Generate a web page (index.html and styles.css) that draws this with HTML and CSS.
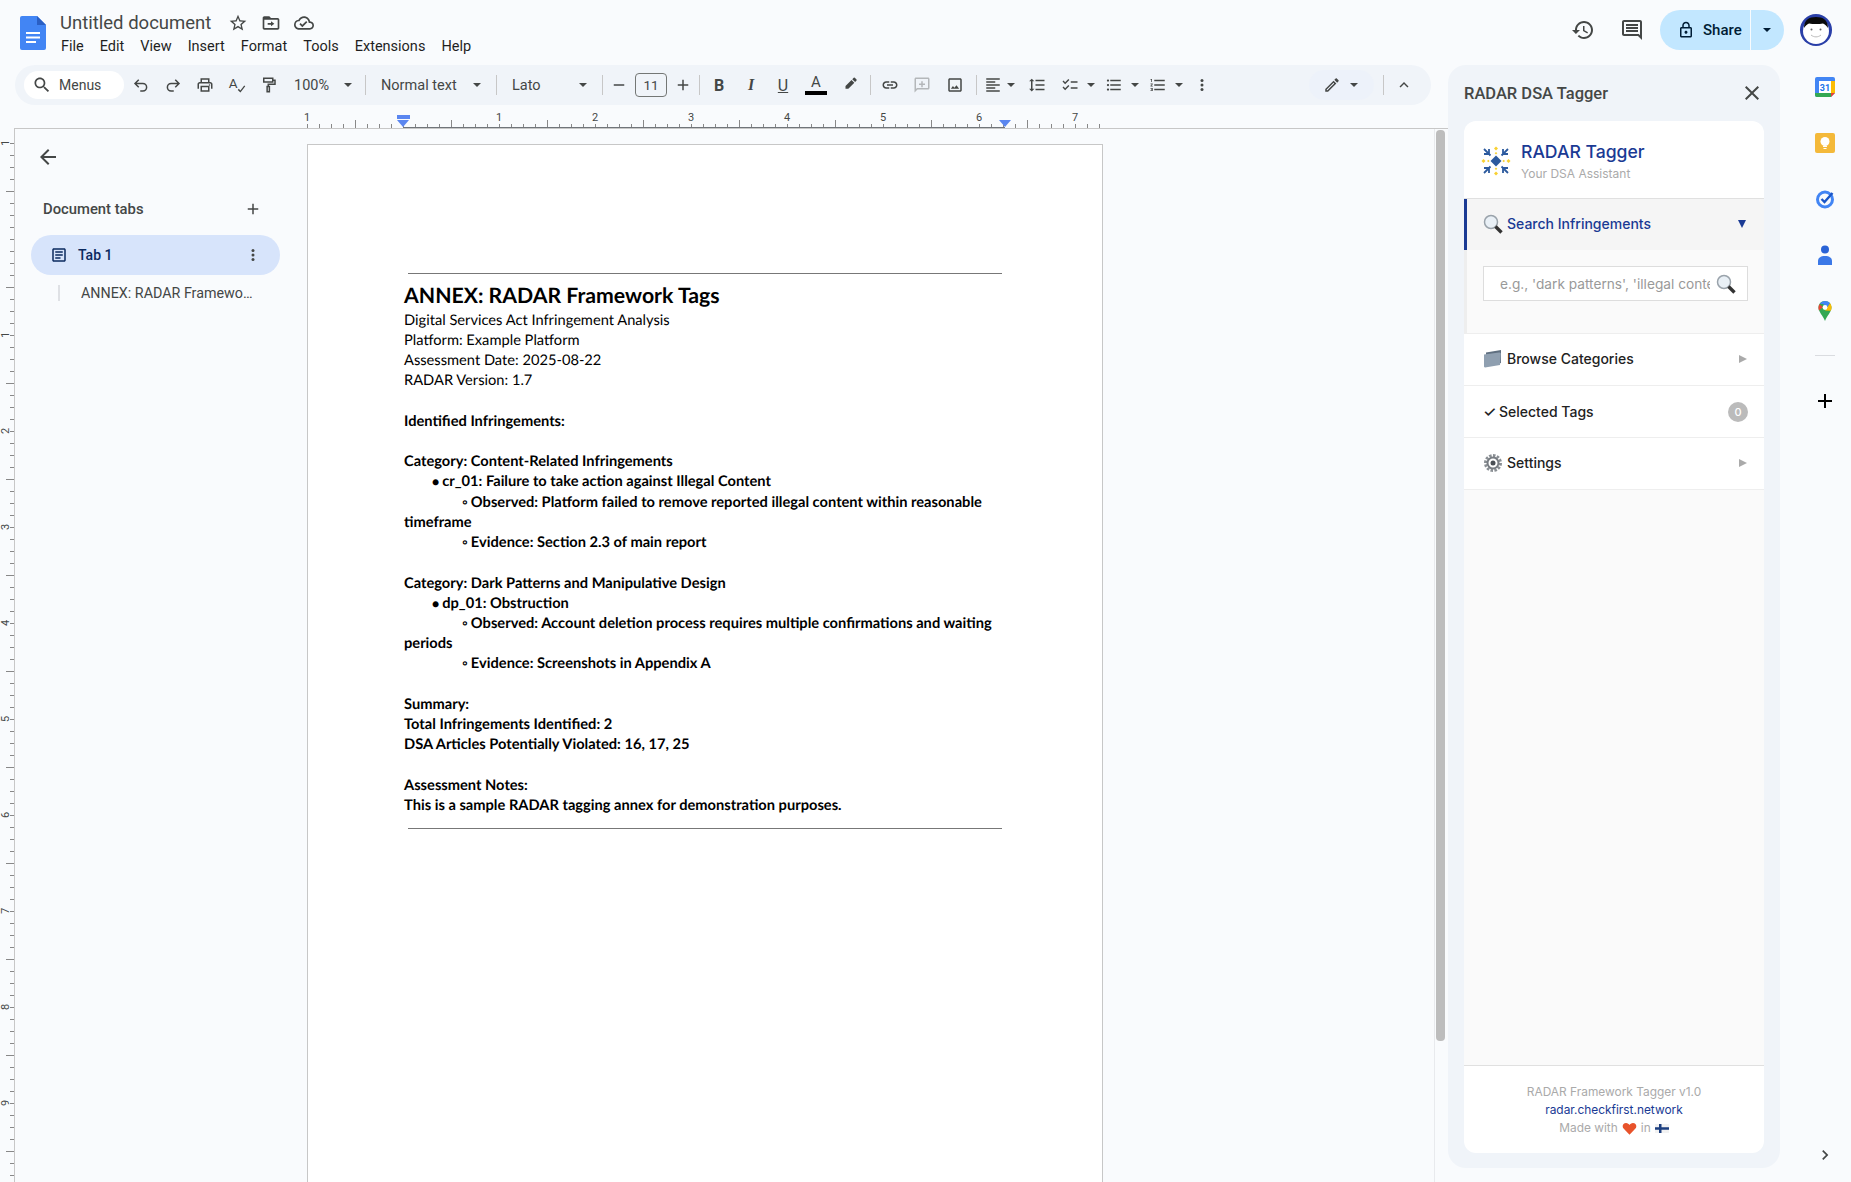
FILE: index.html
```html
<!DOCTYPE html>
<html lang="en">
<head>
    <meta charset="UTF-8">
    <meta name="viewport" content="width=device-width, initial-scale=1.0">
    <title>Untitled document</title>
    <link rel="stylesheet" href="styles.css">
</head>
<body>

    <header class="topbar">
        <svg class="docs-logo" viewBox="0 0 26 34">
            <path d="M2 0h15l9 9v23a2 2 0 0 1-2 2H2a2 2 0 0 1-2-2V2a2 2 0 0 1 2-2z" fill="#4285f4"/>
            <path d="M17 0l9 9h-9z" fill="#2a5fc4"/>
            <path d="M6 16h14v2H6zM6 20.500h14v2H6zM6 25h10v2H6z" fill="#fff"/>
        </svg>
        <div class="doc-head">
            <div class="title-row">
                <span class="doc-title">Untitled document</span>
                <svg class="title-icon first" viewBox="0 0 24 24"><path d="M22 9.240l-7.190-.620L12 2 9.190 8.630 2 9.240l5.460 4.730L5.820 21 12 17.270 18.180 21l-1.630-7.030L22 9.240zM12 15.400l-3.760 2.270 1-4.280-3.320-2.880 4.380-.380L12 6.100l1.710 4.040 4.380.380-3.320 2.880 1 4.280L12 15.400z"/></svg>
                <svg class="title-icon" viewBox="0 0 24 24"><path d="M20 6h-8l-2-2H4c-1.100 0-2 .900-2 2v12c0 1.100.900 2 2 2h16c1.100 0 2-.900 2-2V8c0-1.100-.900-2-2-2zm0 12H4V8h16v10zM12 16l4-3-4-3v2H8v2h4z"/></svg>
                <svg class="title-icon" viewBox="0 0 24 24"><path d="M19.350 10.040C18.670 6.590 15.640 4 12 4 9.110 4 6.600 5.640 5.350 8.040 2.340 8.360 0 10.910 0 14c0 3.310 2.690 6 6 6h13c2.760 0 5-2.240 5-5 0-2.640-2.050-4.780-4.650-4.960zM19 18H6c-2.210 0-4-1.790-4-4 0-2.050 1.530-3.760 3.560-3.970l1.070-.110.500-.950C8.080 7.140 9.940 6 12 6c2.620 0 4.880 1.860 5.390 4.430l.300 1.500 1.530.110c1.560.100 2.780 1.410 2.780 2.960 0 1.650-1.350 3-3 3zm-9-3.820l-2.090-2.090L6.500 13.500 10 17l6.010-6.010-1.410-1.410z"/></svg>
            </div>
            <nav class="menubar">
                <span>File</span><span>Edit</span><span>View</span><span>Insert</span><span>Format</span><span>Tools</span><span>Extensions</span><span>Help</span>
            </nav>
        </div>
        <div class="top-actions">
            <svg class="top-icon" viewBox="0 0 24 24"><path d="M13 3c-4.970 0-9 4.030-9 9H1l3.890 3.890.070.140L9 12H6c0-3.870 3.130-7 7-7s7 3.130 7 7-3.130 7-7 7c-1.930 0-3.680-.790-4.940-2.060l-1.420 1.420C8.270 19.990 10.510 21 13 21c4.970 0 9-4.030 9-9s-4.030-9-9-9zm-1 5v5l4.280 2.540.720-1.210-3.500-2.080V8H12z"/></svg>
            <svg class="top-icon" viewBox="0 0 24 24"><path d="M21.990 4c0-1.100-.890-2-1.990-2H4c-1.100 0-2 .900-2 2v12c0 1.100.900 2 2 2h14l4 4-.010-18zM20 4v13.170L18.830 16H4V4h16zM6 12h12v2H6zm0-3h12v2H6zm0-3h12v2H6z"/></svg>
            <div class="share">
                <div class="share-main">
                    <svg class="share-lock" viewBox="0 0 24 24"><path d="M18 8h-1V6c0-2.760-2.240-5-5-5S7 3.240 7 6v2H6c-1.100 0-2 .900-2 2v10c0 1.100.900 2 2 2h12c1.100 0 2-.900 2-2V10c0-1.100-.900-2-2-2zM9 6c0-1.660 1.340-3 3-3s3 1.340 3 3v2H9V6zm9 14H6V10h12v10zm-6-3c1.100 0 2-.900 2-2s-.900-2-2-2-2 .900-2 2 .900 2 2 2z"/></svg>
                    <span>Share</span>
                </div>
                <div class="share-more"><i class="caret dark"></i></div>
            </div>
            <svg class="avatar" viewBox="0 0 32 32">
                <circle cx="16" cy="16" r="16" fill="#2a3fa8"/>
                <circle cx="16" cy="17" r="13" fill="#fff"/>
                <path d="M4 14C4 6 9 3 16 3s12 3 12 11c-1.500-2-3-4-5-4.500-4 .800-10 .800-14 0C7 10 5.500 12 4 14z" fill="#0a0a0a"/>
                <path d="M11 21c3 2.500 7 2.500 10 0" fill="none" stroke="#bbb" stroke-width="1"/>
                <circle cx="11.500" cy="15.500" r="1" fill="#666"/>
                <circle cx="20.500" cy="15.500" r="1" fill="#666"/>
            </svg>
        </div>
    </header>

    <div class="workspace">
        <main class="doc-area">
            <div class="toolbar">
                <div class="menus-search">
                    <svg viewBox="0 0 24 24"><path d="M15.500 14h-.790l-.280-.270C15.410 12.590 16 11.110 16 9.500 16 5.910 13.090 3 9.500 3S3 5.910 3 9.500 5.910 16 9.500 16c1.610 0 3.090-.590 4.230-1.570l.270.280v.790l5 4.990L20.490 19l-4.990-5zm-6 0C7.010 14 5 11.990 5 9.500S7.010 5 9.500 5 14 7.010 14 9.500 11.990 14 9.500 14z"/></svg>
                    <span>Menus</span>
                </div>
                <div class="tb"><svg class="line" viewBox="0 0 24 24"><path d="M9 15 4 10l5-5M4 10h10.500a5 5 0 0 1 0 10H11"/></svg></div>
                <div class="tb"><svg class="line" viewBox="0 0 24 24"><path d="m15 15 5-5-5-5M20 10H9.500a5 5 0 0 0 0 10H13"/></svg></div>
                <div class="tb"><svg viewBox="0 0 24 24"><path d="M19 8h-1V3H6v5H5c-1.660 0-3 1.340-3 3v6h4v4h12v-4h4v-6c0-1.660-1.340-3-3-3zM8 5h8v3H8V5zm8 14H8v-4h8v4zm2-2v-4H6v4H4v-6c0-.550.450-1 1-1h14c.550 0 1 .450 1 1v6h-2z"/><circle cx="18" cy="12" r="1"/></svg></div>
                <div class="tb"><svg viewBox="0 0 24 24"><text x="1" y="16" class="icon-letter">A</text><path d="m13 18.500 1.400-1.400 2.100 2.100 5.100-6.600 1.400 1.200-6.400 8.200z"/></svg></div>
                <div class="tb"><svg class="line" viewBox="0 0 24 24"><path d="M5 3h12v5H5zM17 5.500h3V11h-9v3M9.500 14h3v7h-3z"/></svg></div>
                <div class="drop drop-zoom"><span>100%</span><i class="caret"></i></div>
                <i class="sep"></i>
                <div class="drop drop-style"><span>Normal text</span><i class="caret"></i></div>
                <i class="sep"></i>
                <div class="drop drop-font"><span>Lato</span><i class="caret"></i></div>
                <i class="sep"></i>
                <div class="tb"><svg viewBox="0 0 24 24"><path d="M5 11h14v2H5z"/></svg></div>
                <div class="size-box">11</div>
                <div class="tb"><svg viewBox="0 0 24 24"><path d="M19 13h-6v6h-2v-6H5v-2h6V5h2v6h6v2z"/></svg></div>
                <i class="sep"></i>
                <div class="tb tb-bold">B</div>
                <div class="tb tb-italic">I</div>
                <div class="tb tb-under">U</div>
                <div class="tb tb-color"><span>A</span><i></i></div>
                <div class="tb tb-pen"><svg viewBox="0 0 24 24"><path d="M17.750 9 14 5.250l-8 8V17h3.750l8-8zm2.960-2.960c.390-.390.390-1.020 0-1.410l-2.340-2.340a.996.996 0 0 0-1.410 0L15 4.250 18.750 8l1.960-1.960z"/></svg></div>
                <i class="sep sep-after-pen"></i>
                <div class="tb tb-link"><svg viewBox="0 0 24 24"><path d="M17 7h-4v2h4c1.650 0 3 1.350 3 3s-1.350 3-3 3h-4v2h4c2.760 0 5-2.240 5-5s-2.240-5-5-5zm-6 8H7c-1.650 0-3-1.350-3-3s1.350-3 3-3h4V7H7c-2.760 0-5 2.240-5 5s2.240 5 5 5h4v-2zm-3-4h8v2H8z"/></svg></div>
                <div class="tb tb-off"><svg viewBox="0 0 24 24"><path d="M20 2H4c-1.100 0-2 .900-2 2v18l4-4h14c1.100 0 2-.900 2-2V4c0-1.100-.900-2-2-2zm0 14H5.200L4 17.200V4h16v12zM13 7h-2v3H8v2h3v3h2v-3h3v-2h-3z"/></svg></div>
                <div class="tb tb-image"><svg viewBox="0 0 24 24"><path d="M19 3H5c-1.100 0-2 .900-2 2v14c0 1.100.900 2 2 2h14c1.100 0 2-.900 2-2V5c0-1.100-.900-2-2-2zm0 16H5V5h14v14zm-5.040-6.710-2.750 3.540-1.960-2.360L6.500 17h11l-3.540-4.710z"/></svg></div>
                <i class="sep sep-after-image"></i>
                <div class="tb-split tb-align">
                    <svg viewBox="0 0 24 24"><path d="M15 15H3v2h12v-2zm0-8H3v2h12V7zM3 13h18v-2H3v2zm0 8h18v-2H3v2zM3 3v2h18V3H3z"/></svg><i class="caret"></i>
                </div>
                <div class="tb"><svg viewBox="0 0 24 24"><path d="M6 7h2.500L5 3.500 1.500 7H4v10H1.500L5 20.500 8.500 17H6V7zm4-2v2h12V5H10zm0 14h12v-2H10v2zm0-6h12v-2H10v2z"/></svg></div>
                <div class="tb-split tb-check">
                    <svg viewBox="0 0 24 24"><path d="M22 7h-9v2h9V7zm0 8h-9v2h9v-2zM5.540 11 2 7.460l1.410-1.410 2.120 2.120 4.240-4.240 1.410 1.410L5.540 11zm0 8L2 15.460l1.410-1.410 2.120 2.120 4.240-4.240 1.410 1.410L5.540 19z"/></svg><i class="caret"></i>
                </div>
                <div class="tb-split">
                    <svg viewBox="0 0 24 24"><path d="M4 10.500c-.830 0-1.500.670-1.500 1.500s.670 1.500 1.500 1.500 1.500-.670 1.500-1.500-.670-1.500-1.500-1.500zm0-6c-.830 0-1.500.670-1.500 1.500S3.170 7.500 4 7.500 5.500 6.830 5.500 6 4.830 4.500 4 4.500zm0 12c-.830 0-1.500.680-1.500 1.500s.680 1.500 1.500 1.500 1.500-.680 1.500-1.500-.670-1.500-1.500-1.500zM7 19h14v-2H7v2zm0-6h14v-2H7v2zm0-8v2h14V5H7z"/></svg><i class="caret"></i>
                </div>
                <div class="tb-split">
                    <svg viewBox="0 0 24 24"><path d="M2 17h2v.500H3v1h1v.500H2v1h3v-4H2v1zm1-9h1V4H2v1h1v3zm-1 3h1.800L2 13.100v.900h3v-1H3.200L5 10.900V10H2v1zm5-6v2h14V5H7zm0 14h14v-2H7v2zm0-6h14v-2H7v2z"/></svg><i class="caret"></i>
                </div>
                <div class="tb tb-more"><svg viewBox="0 0 24 24"><circle cx="12" cy="6" r="2"/><circle cx="12" cy="12" r="2"/><circle cx="12" cy="18" r="2"/></svg></div>
                <div class="mode-pill">
                    <svg viewBox="0 0 24 24"><path d="M3 17.250V21h3.750L17.810 9.940l-3.750-3.750L3 17.250zM5.920 19H5v-.920l9.060-9.060.920.920L5.920 19zM20.710 5.630l-2.340-2.340c-.200-.200-.450-.290-.710-.290s-.510.100-.700.290l-1.830 1.830 3.750 3.750 1.830-1.830c.390-.390.390-1.020 0-1.410z"/></svg>
                    <i class="caret"></i>
                </div>
                <i class="sep sep-mode"></i>
                <div class="tb tb-collapse"><svg viewBox="0 0 24 24"><path d="M7.410 15.410 12 10.830l4.590 4.580L18 14l-6-6-6 6z"/></svg></div>
            </div>

            <div class="ruler">
                <div class="ruler-track">
                    <div class="ruler-nums">
                        <span>1</span><span></span><span>1</span><span>2</span><span>3</span><span>4</span><span>5</span><span>6</span><span>7</span>
                    </div>
                    <i class="indent-bar"></i>
                    <i class="marker marker-left"></i>
                    <i class="marker marker-right"></i>
                    <i class="ruler-active"></i>
                </div>
            </div>

            <div class="doc-body">
                <div class="vruler">
                    <span>1</span><span></span><span>1</span><span>2</span><span>3</span><span>4</span><span>5</span><span>6</span><span>7</span><span>8</span><span>9</span>
                </div>
                <div class="editor">
                    <aside class="outline">
                        <svg class="back" viewBox="0 0 24 24"><path d="M20 11H7.830l5.590-5.590L12 4l-8 8 8 8 1.410-1.410L7.830 13H20v-2z"/></svg>
                        <div class="outline-head">
                            <span>Document tabs</span>
                            <svg viewBox="0 0 24 24"><path d="M19 13h-6v6h-2v-6H5v-2h6V5h2v6h6v2z"/></svg>
                        </div>
                        <div class="tab-pill">
                            <svg viewBox="0 0 24 24"><path d="M19 5v14H5V5h14m0-2H5c-1.100 0-2 .900-2 2v14c0 1.100.900 2 2 2h14c1.100 0 2-.900 2-2V5c0-1.100-.900-2-2-2zM14 17H7v-2h7v2zm3-4H7v-2h10v2zm0-4H7V7h10v2z"/></svg>
                            <span>Tab 1</span>
                            <svg class="tab-dots" viewBox="0 0 24 24"><circle cx="12" cy="6" r="2"/><circle cx="12" cy="12" r="2"/><circle cx="12" cy="18" r="2"/></svg>
                        </div>
                        <div class="outline-item"><span>ANNEX: RADAR Framework Tags</span></div>
                    </aside>
                    <article class="page">
                        <div class="page-rule"></div>
                        <h1>ANNEX: RADAR Framework Tags</h1>
                        <p>Digital Services Act Infringement Analysis</p>
                        <p>Platform: Example Platform</p>
                        <p>Assessment Date: 2025-08-22</p>
                        <p>RADAR Version: 1.7</p>
                        <p class="blank"></p>
                        <p class="b">Identified Infringements:</p>
                        <p class="blank"></p>
                        <p class="b">Category: Content-Related Infringements</p>
                        <p class="b lvl1"><span class="dot">●</span>cr_01: Failure to take action against Illegal Content</p>
                        <p class="b lvl2"><span class="ring">◦</span>Observed: Platform failed to remove reported illegal content within reasonable timeframe</p>
                        <p class="b lvl2"><span class="ring">◦</span>Evidence: Section 2.3 of main report</p>
                        <p class="blank"></p>
                        <p class="b">Category: Dark Patterns and Manipulative Design</p>
                        <p class="b lvl1"><span class="dot">●</span>dp_01: Obstruction</p>
                        <p class="b lvl2"><span class="ring">◦</span>Observed: Account deletion process requires multiple confirmations and waiting periods</p>
                        <p class="b lvl2"><span class="ring">◦</span>Evidence: Screenshots in Appendix A</p>
                        <p class="blank"></p>
                        <p class="b">Summary:</p>
                        <p class="b">Total Infringements Identified: 2</p>
                        <p class="b">DSA Articles Potentially Violated: 16, 17, 25</p>
                        <p class="blank"></p>
                        <p class="b">Assessment Notes:</p>
                        <p class="b">This is a sample RADAR tagging annex for demonstration purposes.</p>
                        <div class="page-rule end"></div>
                    </article>
                    <div class="scrollbar"><i></i></div>
                </div>
            </div>
        </main>

        <section class="panel">
            <div class="panel-head">
                <span>RADAR DSA Tagger</span>
                <svg viewBox="0 0 24 24"><path d="M19 6.410 17.590 5 12 10.590 6.410 5 5 6.410 10.590 12 5 17.590 6.410 19 12 13.410 17.590 19 19 17.590 13.410 12z"/></svg>
            </div>
            <div class="card">
                <div class="brand">
                    <svg class="brand-logo" viewBox="0 0 32 32">
                        <path d="M16 10.500 21.500 16 16 21.500 10.500 16z" fill="#2c5a9e"/>
                        <g fill="#f8d030">
                            <path d="M16 1.500 18 3.500 16 5.500 14 3.500z"/><path d="M16 7 17.300 8.300 16 9.600 14.700 8.300z"/>
                            <path d="M16 26.500 18 28.500 16 30.500 14 28.500z"/><path d="M16 22.400 17.300 23.700 16 25 14.700 23.700z"/>
                            <path d="M1.500 16 3.500 14 5.500 16 3.500 18z"/><path d="M7 16 8.300 14.700 9.600 16 8.300 17.300z"/>
                            <path d="M26.500 16 28.500 14 30.500 16 28.500 18z"/><path d="M22.400 16 23.700 14.700 25 16 23.700 17.300z"/>
                        </g>
                        <g fill="none" stroke="#2c5a9e" stroke-width="1.800">
                            <path d="M4 4l6.500 6.500M4 9h5.500M9 4v5.500"/><path d="M28 4l-6.500 6.500M28 9h-5.500M23 4v5.500"/>
                            <path d="M4 28l6.500-6.500M4 23h5.500M9 28v-5.500"/><path d="M28 28l-6.500-6.500M28 23h-5.500M23 28v-5.500"/>
                        </g>
                    </svg>
                    <div>
                        <div class="brand-name">RADAR Tagger</div>
                        <div class="brand-sub">Your DSA Assistant</div>
                    </div>
                </div>

                <div class="sec-head active">
                    <svg class="emoji" viewBox="0 0 20 20"><circle cx="8" cy="8" r="6.500" fill="#e9f0f6" stroke="#9aa3ab" stroke-width="1.500"/><path d="M12.500 12.500 18.500 18.500" stroke="#333" stroke-width="3.400"/></svg>
                    <span class="sec-label">Search Infringements</span>
                    <i class="arrow-down"></i>
                </div>
                <div class="sec-body">
                    <div class="search-box">
                        <input type="text" placeholder="e.g., 'dark patterns', 'illegal content'">
                        <svg class="emoji" viewBox="0 0 20 20"><circle cx="8" cy="8" r="6.500" fill="#e9f0f6" stroke="#9aa3ab" stroke-width="1.500"/><path d="M12.500 12.500 18.500 18.500" stroke="#333" stroke-width="3.400"/></svg>
                    </div>
                </div>

                <div class="sec-head">
                    <svg class="emoji" viewBox="0 0 20 20"><path d="M3 3.500 18 1v13L3 17z" fill="#5f6f80"/><path d="M1 5.500 16 3.500c1.200 0 1.800.500 1.800 1.500L17 16 2 18.500c-.700 0-1-.500-1-1.200z" fill="#8f9fb0"/></svg>
                    <span class="sec-label">Browse Categories</span>
                    <i class="arrow-right"></i>
                </div>
                <div class="sec-head tags">
                    <span class="check">✓</span>
                    <span class="sec-label">Selected Tags</span>
                    <span class="badge">0</span>
                </div>
                <div class="sec-head">
                    <svg class="emoji" viewBox="0 0 20 20"><circle cx="10" cy="10" r="7.500" fill="none" stroke="#8a8f94" stroke-width="3" stroke-dasharray="2.500 1.400"/><circle cx="10" cy="10" r="5.500" fill="none" stroke="#777c82" stroke-width="2"/><circle cx="10" cy="10" r="2.500" fill="#4a4f55"/></svg>
                    <span class="sec-label">Settings</span>
                    <i class="arrow-right"></i>
                </div>

                <div class="card-fill"></div>

                <footer class="card-foot">
                    <div>RADAR Framework Tagger v1.0</div>
                    <div class="foot-link">radar.checkfirst.network</div>
                    <div class="foot-made">Made with
                        <svg class="heart" viewBox="0 0 24 24"><path d="M12 22 2.500 12C-.500 8.500 1.500 3 6.500 3c2.500 0 4.500 1.500 5.500 3.500C13 4.500 15 3 17.500 3c5 0 7 5.500 4 9z" fill="#e8532b"/></svg>
                        in
                        <svg class="flag" viewBox="0 0 14 9"><path d="M0 0h14v9H0z" fill="#f2f2f2"/><path d="M4 0h2.500v9H4zM0 3.300h14v2.400H0z" fill="#1c3f80"/></svg>
                    </div>
                </footer>
            </div>
        </section>

        <aside class="rail">
            <svg class="rail-icon" viewBox="0 0 20 20">
                <path d="M2 0h16a2 2 0 0 1 2 2v14l-4 4H2a2 2 0 0 1-2-2V2a2 2 0 0 1 2-2z" fill="#4285f4"/>
                <path d="M0 16h16v4H2a2 2 0 0 1-2-2z" fill="#34a853"/>
                <path d="M16 4h4v12h-4z" fill="#fbbc04"/>
                <path d="M16 16h4l-4 4z" fill="#ea4335"/>
                <path d="M4 4h12v12H4z" fill="#fff"/>
                <text x="10" y="13.500" class="cal-num">31</text>
            </svg>
            <svg class="rail-icon" viewBox="0 0 20 20">
                <rect width="20" height="20" rx="2" fill="#f4b93a"/>
                <circle cx="10" cy="8.500" r="4.500" fill="#fff"/>
                <path d="M8 13h4v1H8zM8.500 15h3v1h-3z" fill="#fff"/>
            </svg>
            <svg class="rail-icon" viewBox="0 0 20 20">
                <circle cx="10" cy="10.500" r="7.500" fill="none" stroke="#4285f4" stroke-width="3"/>
                <path d="m6.500 10 3 3 8-9" fill="none" stroke="#1a56c8" stroke-width="2.400"/>
            </svg>
            <svg class="rail-icon" viewBox="0 0 20 20">
                <circle cx="10" cy="4.500" r="4" fill="#2a63d6"/>
                <path d="M3 20v-4c0-3 2.500-5 7-5s7 2 7 5v4z" fill="#3b78e7"/>
            </svg>
            <svg class="rail-icon" viewBox="0 0 20 20">
                <path d="M10 0c3.600 0 6.500 2.800 6.500 6.500 0 4.500-4.500 8-6.500 13.500C8 14.500 3.500 11 3.500 6.500 3.500 2.800 6.400 0 10 0z" fill="#34a853"/>
                <path d="M4.500 3.200 8 6l-4.100 3.500C3.600 8.600 3.500 7.500 3.500 6.500c0-1.300.400-2.400 1-3.300z" fill="#ea4335"/>
                <path d="M10 0c2 0 3.800.900 5 2.300L12 6.500 8 3 5 3c1-1.800 3-3 5-3z" fill="#4285f4"/>
                <path d="M15 2.300c1 1.100 1.500 2.600 1.500 4.200 0 1.200-.300 2.300-.800 3.300L10 9.500z" fill="#fbbc04"/>
                <circle cx="10" cy="6.500" r="2.400" fill="#fff"/>
            </svg>
            <i class="rail-sep"></i>
            <svg class="rail-add" viewBox="0 0 24 24"><path d="M19 13h-6v6h-2v-6H5v-2h6V5h2v6h6v2z"/></svg>
            <svg class="rail-chev" viewBox="0 0 24 24"><path d="M10 6 8.590 7.410 13.170 12l-4.580 4.590L10 18l6-6z"/></svg>
        </aside>
    </div>

</body>
</html>
```

FILE: styles.css
```css
* {
    margin: 0;
    padding: 0;
    box-sizing: border-box;
}

html, body {
    height: 100%;
}

body {
    font-family: Roboto, "Liberation Sans", sans-serif;
    background-color: #f9fbfd;
    color: #444746;
    display: flex;
    flex-direction: column;
    overflow: hidden;
}

svg {
    display: block;
    flex-shrink: 0;
    fill: currentColor;
}

i {
    display: block;
    font-style: normal;
}

/* Top bar */
.topbar {
    height: 65px;
    flex-shrink: 0;
    display: flex;
    padding-left: 20px;
}

.docs-logo {
    width: 26px;
    height: 34px;
    margin-top: 16px;
    margin-right: 14px;
}

.doc-head {
    padding-top: 11px;
}

.title-row {
    display: flex;
    align-items: center;
    height: 24px;
    color: #444746;
}

.doc-title {
    font-size: 18.500px;
    width: 151px;
    white-space: nowrap;
}

.title-icon {
    width: 20px;
    height: 20px;
    margin-left: 13px;
}

.title-icon.first {
    margin-left: 17px;
}

.menubar {
    display: flex;
    height: 22px;
    align-items: center;
    padding-left: 1px;
    font-size: 14.500px;
    color: #1f1f1f;
    gap: 16px;
}

.top-actions {
    margin-left: auto;
    display: flex;
    align-items: center;
    padding-right: 19px;
    height: 60px;
    color: #444746;
}

.top-icon {
    width: 24px;
    height: 24px;
    margin-right: 25px;
}

.top-icon + .share {
    margin-left: -9px;
}

.share {
    display: flex;
    height: 40px;
    width: 124px;
    margin-right: 16px;
    color: #001d35;
}

.share-main {
    width: 90px;
    background-color: #c2e7ff;
    border-radius: 20px 0 0 20px;
    display: flex;
    align-items: center;
    padding-left: 17px;
    font-size: 15px;
    font-weight: 500;
    gap: 8px;
}

.share-lock {
    width: 18px;
    height: 18px;
}

.share-more {
    flex: 1;
    margin-left: 1px;
    background-color: #c2e7ff;
    border-radius: 0 20px 20px 0;
    display: flex;
    align-items: center;
    padding-left: 12px;
}

.avatar {
    width: 32px;
    height: 32px;
}

.caret {
    width: 0;
    height: 0;
    flex-shrink: 0;
    border-left: 4px solid transparent;
    border-right: 4px solid transparent;
    border-top: 4px solid #444746;
}

.caret.dark {
    border-top-color: #001d35;
}

/* Layout below the top bar */
.workspace {
    flex: 1;
    min-height: 0;
    display: flex;
}

.doc-area {
    width: 1448px;
    display: flex;
    flex-direction: column;
    min-height: 0;
}

/* Toolbar */
.toolbar {
    height: 40px;
    margin: 0 17px 0 15px;
    padding-left: 9px;
    background-color: #f0f4f9;
    border-radius: 20px;
    display: flex;
    align-items: center;
    flex-shrink: 0;
    font-size: 14.500px;
    color: #444746;
}

.menus-search {
    width: 100px;
    height: 28px;
    margin-right: 1px;
    background-color: #fff;
    border-radius: 14px;
    display: flex;
    align-items: center;
    padding-left: 8px;
    gap: 7px;
    font-size: 14px;
}

.menus-search svg {
    width: 20px;
    height: 20px;
}

.tb {
    width: 32px;
    height: 28px;
    flex-shrink: 0;
    display: flex;
    align-items: center;
    justify-content: center;
}

.tb svg {
    width: 18px;
    height: 18px;
}

.tb svg.line {
    fill: none;
    stroke: currentColor;
    stroke-width: 2;
}

.icon-letter {
    font-family: Roboto, sans-serif;
    font-size: 18px;
    fill: #444746;
}

.tb-off {
    color: #b4b7ba;
}

.tb-bold, .tb-italic, .tb-under {
    font-weight: 700;
    font-size: 16px;
}

.tb-bold {
    margin-left: 3px;
}

.tb-italic {
    font-style: italic;
    font-family: "Liberation Serif", serif;
}

.tb-under {
    text-decoration: underline;
    font-weight: 400;
}

.tb-color {
    flex-direction: column;
    font-size: 15px;
    width: 34px;
    line-height: 15px;
}

.tb-color i {
    width: 22px;
    height: 4px;
    margin-top: 1px;
    background-color: #000;
}

.tb-pen {
    margin-left: 1px;
}

.tb-link {
    margin-left: 3px;
}

.tb-image {
    margin-left: 1px;
}

.tb-more {
    width: 28px;
    margin-left: 2px;
}

.tb-split {
    width: 44px;
    flex-shrink: 0;
    display: flex;
    align-items: center;
    padding-left: 7px;
    gap: 8px;
}

.tb-align {
    gap: 5px;
}

.tb-check {
    margin-left: 1px;
}

.tb-split svg {
    width: 18px;
    height: 18px;
}

.sep {
    width: 1px;
    height: 20px;
    background-color: #c7c7c7;
    flex-shrink: 0;
}

.sep-after-pen {
    margin-left: 4px;
}

.sep-after-image {
    margin-left: 5px;
}

.drop {
    display: flex;
    align-items: center;
    height: 28px;
    white-space: nowrap;
}

.drop span {
    flex: 1;
}

.drop-zoom {
    width: 80px;
    padding: 0 13px 0 9px;
}

.drop-style {
    width: 130px;
    padding: 0 15px;
}

.drop-font {
    width: 105px;
    padding: 0 15px;
}

.size-box {
    width: 32px;
    height: 24px;
    flex-shrink: 0;
    border: 1px solid #747775;
    border-radius: 4px;
    text-align: center;
    line-height: 22px;
    font-size: 13.500px;
}

.mode-pill {
    margin-left: auto;
    width: 65px;
    height: 30px;
    border-radius: 15px;
    display: flex;
    align-items: center;
    padding-left: 14px;
    gap: 9px;
    background-color: #edf2fa;
}

.mode-pill svg {
    width: 18px;
    height: 18px;
}

.sep-mode {
    margin-left: 9px;
}

.tb-collapse {
    width: 40px;
    margin-right: 7px;
}

/* Horizontal ruler */
.ruler {
    height: 23px;
    flex-shrink: 0;
    padding-left: 307px;
}

.ruler-track {
    position: relative;
    width: 796px;
    height: 23px;
    background:
        repeating-linear-gradient(to right, #888 0 1px, transparent 1px 96px) 48px 100% / 100% 8px no-repeat,
        repeating-linear-gradient(to right, #888 0 1px, transparent 1px 12px) 0 100% / 100% 4px no-repeat;
}

.ruler-nums {
    display: flex;
    margin-left: -48px;
    font-size: 11px;
    line-height: 16px;
    padding-top: 5px;
    color: #444746;
}

.ruler-nums span {
    width: 96px;
    flex-shrink: 0;
    text-align: center;
}

.ruler-active {
    position: absolute;
    left: 96px;
    bottom: 0;
    width: 602px;
    height: 1px;
    background-color: #70757a;
}

.indent-bar {
    position: absolute;
    left: 90px;
    top: 10px;
    width: 13px;
    height: 4px;
    background-color: #5a86f0;
}

.marker {
    position: absolute;
    top: 15px;
    width: 0;
    height: 0;
    border-left: 6px solid transparent;
    border-right: 6px solid transparent;
    border-top: 7px solid #5a86f0;
}

.marker-left {
    left: 90px;
}

.marker-right {
    left: 692px;
}

/* Vertical ruler and editor */
.doc-body {
    flex: 1;
    min-height: 0;
    display: flex;
}

.vruler {
    width: 14px;
    flex-shrink: 0;
    background:
        repeating-linear-gradient(to bottom, #888 0 1px, transparent 1px 96px) 100% 63px / 8px 100% no-repeat,
        repeating-linear-gradient(to bottom, #888 0 1px, transparent 1px 12px) 100% 15px / 4px 100% no-repeat;
}

.vruler span {
    display: block;
    height: 96px;
    width: 12px;
    line-height: 12px;
    font-size: 11px;
    text-align: center;
    writing-mode: vertical-lr;
    transform: rotate(180deg);
    color: #444746;
}

.vruler span:first-child {
    margin-top: -33px;
}

.editor {
    flex: 1;
    min-width: 0;
    display: flex;
    border-top: 1px solid #c7c7c7;
    border-left: 1px solid #c7c7c7;
    overflow: hidden;
}

.outline {
    width: 292px;
    flex-shrink: 0;
    padding-top: 16px;
}

.back {
    width: 24px;
    height: 24px;
    margin-left: 21px;
    color: #444746;
}

.outline-head {
    display: flex;
    align-items: center;
    height: 20px;
    margin-top: 30px;
    padding: 0 45px 0 28px;
    font-size: 14.800px;
    font-weight: 500;
    justify-content: space-between;
}

.outline-head svg {
    width: 18px;
    height: 18px;
}

.tab-pill {
    width: 249px;
    height: 40px;
    margin: 16px 0 0 16px;
    padding: 0 18px 0 19px;
    border-radius: 20px;
    background-color: #d7e4fb;
    color: #0b2a5f;
    display: flex;
    align-items: center;
    gap: 10px;
    font-size: 14px;
    font-weight: 500;
}

.tab-pill svg {
    width: 18px;
    height: 18px;
}

.tab-dots {
    margin-left: auto;
    color: #444746;
}

.outline-item {
    margin: 10px 0 0 43px;
    height: 16px;
    border-left: 2px solid #dfe1e5;
    padding-left: 21px;
    line-height: 16px;
    font-size: 14.300px;
    color: #444746;
}

.outline-item span {
    display: block;
    width: 172px;
    white-space: nowrap;
    overflow: hidden;
    text-overflow: ellipsis;
}

/* Document page */
.page {
    width: 796px;
    flex-shrink: 0;
    margin-top: 15px;
    padding: 128px 98px 0 96px;
    background-color: #fff;
    border: 1px solid #c7c7c7;
    border-bottom: 0;
    font-family: Lato, sans-serif;
    font-size: 14.670px;
    line-height: 20.240px;
    color: #000;
    text-rendering: geometricPrecision;
}

.page-rule {
    height: 1px;
    margin: 0 2px 0 4px;
    background-color: #777;
}

.page-rule.end {
    margin-top: 12px;
}

.page h1 {
    font-size: 21.250px;
    font-weight: 700;
    line-height: 30.500px;
    margin-top: 6px;
}

.page p {
    min-height: 20.240px;
}

.b {
    font-weight: 700;
}

.lvl1 {
    text-indent: 28px;
}

.lvl2 {
    text-indent: 58px;
}

.dot {
    font-size: 12px;
    line-height: 0;
    margin-right: 3px;
}

.ring {
    font-size: 14px;
    line-height: 0;
    margin-right: 3px;
}

.scrollbar {
    margin-left: auto;
    width: 14px;
    border-left: 1px solid #e8eaed;
    padding: 1px 2px 0 1px;
}

.scrollbar i {
    height: 911px;
    width: 9px;
    border-radius: 4px;
    background-color: #bdbdbd;
}

/* Side panel */
.panel {
    width: 332px;
    height: 1103px;
    flex-shrink: 0;
    background-color: #f0f4f9;
    border-radius: 18px;
    padding: 0 16px 15px;
    display: flex;
    flex-direction: column;
}

.panel-head {
    height: 56px;
    flex-shrink: 0;
    display: flex;
    align-items: center;
    justify-content: space-between;
    font-size: 16.500px;
    font-weight: 500;
}

.panel-head svg {
    width: 24px;
    height: 24px;
}

.card {
    flex: 1;
    background-color: #fff;
    border-radius: 12px;
    overflow: hidden;
    display: flex;
    flex-direction: column;
    font-family: Inter, sans-serif;
}

.brand {
    height: 78px;
    flex-shrink: 0;
    display: flex;
    align-items: center;
    padding: 3px 0 0 16px;
    gap: 9px;
    border-bottom: 1px solid #e0e0e0;
}

.brand-logo {
    width: 32px;
    height: 32px;
}

.brand-name {
    font-size: 17.600px;
    font-weight: 500;
    line-height: 24px;
    color: #1a3a94;
}

.brand-sub {
    font-size: 12px;
    line-height: 16px;
    margin-top: 2px;
    color: #aaa;
}

.sec-head {
    height: 52px;
    flex-shrink: 0;
    display: flex;
    align-items: center;
    padding: 0 16px 2px 19px;
    border-bottom: 1px solid #eee;
    color: #222;
    font-size: 14px;
    font-weight: 500;
}

.sec-head.active {
    height: 51px;
    border-bottom: 0;
    border-left: 3px solid #1a3a94;
    padding-left: 16px;
    background-color: #f5f5f5;
    color: #1a3a94;
}

.sec-head.tags {
    padding-bottom: 0;
}

.emoji {
    width: 20px;
    height: 20px;
}

.sec-label {
    margin-left: 4px;
    flex: 1;
}

.check {
    width: 12px;
    font-size: 15px;
}

.arrow-down {
    width: 0;
    height: 0;
    margin-right: 2px;
    border-left: 4.500px solid transparent;
    border-right: 4.500px solid transparent;
    border-top: 8px solid #1a3a94;
}

.arrow-right {
    width: 0;
    height: 0;
    margin-right: 1px;
    border-top: 4.500px solid transparent;
    border-bottom: 4.500px solid transparent;
    border-left: 8px solid #aaa;
}

.badge {
    width: 20px;
    height: 20px;
    border-radius: 50%;
    background-color: #bbb;
    color: #fff;
    text-align: center;
    line-height: 20px;
    font-size: 11px;
}

.sec-body {
    height: 84px;
    flex-shrink: 0;
    padding: 16px 16px 0 16px;
    background-color: #fafafa;
    border-left: 3px solid #eee;
    border-bottom: 1px solid #eee;
}

.search-box {
    height: 35px;
    display: flex;
    align-items: center;
    background-color: #fff;
    border: 1px solid #ddd;
    padding: 0 11px 0 16px;
    gap: 6px;
}

.search-box input {
    flex: 1;
    min-width: 0;
    border: 0;
    outline: 0;
    background: transparent;
    font-family: Inter, sans-serif;
    font-size: 13.700px;
}

.search-box input::placeholder {
    color: #999;
}

.card-fill {
    flex: 1;
    background-color: #fafafa;
}

.card-foot {
    height: 88px;
    flex-shrink: 0;
    border-top: 1px solid #e0e0e0;
    padding-top: 17px;
    text-align: center;
    font-size: 11.900px;
    line-height: 18px;
    color: #aaa;
}

.foot-link {
    color: #1a3a94;
}

.foot-made {
    display: flex;
    justify-content: center;
    align-items: center;
    gap: 4px;
}

.heart {
    width: 15px;
    height: 15px;
}

.flag {
    width: 14px;
    height: 9px;
}

/* Right rail */
.rail {
    flex: 1;
    padding: 12px 0 17px 18px;
    display: flex;
    flex-direction: column;
    align-items: center;
    height: 1117px;
}

.rail-icon {
    width: 20px;
    height: 20px;
    margin-bottom: 36px;
}

.cal-num {
    font-family: Roboto, sans-serif;
    font-size: 9px;
    font-weight: 700;
    text-anchor: middle;
    fill: #1a73e8;
}

.rail-sep {
    width: 20px;
    height: 1px;
    margin-top: -2px;
    background-color: #dadce0;
}

.rail-add {
    width: 24px;
    height: 24px;
    margin-top: 33px;
    color: #000;
}

.rail-chev {
    width: 20px;
    height: 20px;
    margin-top: auto;
    color: #444746;
}
```
